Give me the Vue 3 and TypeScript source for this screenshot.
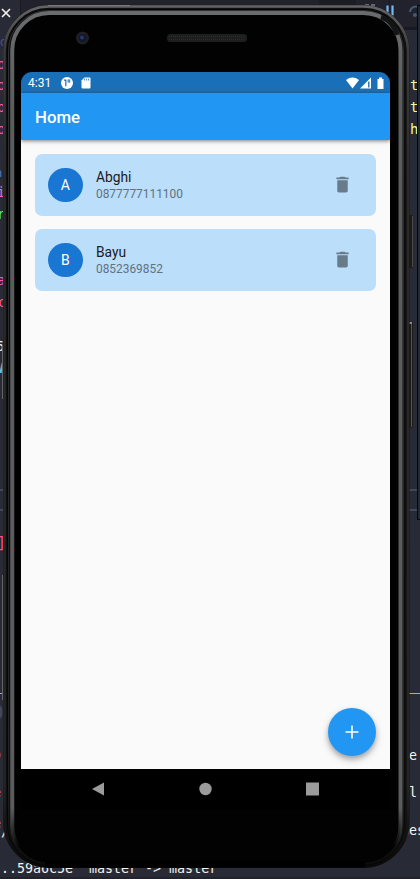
<script setup lang="ts">
interface Contact {
  name: string
  phone: string
}

interface Fragment {
  text: string
  x: number
  y: number
  color: string
  size?: number
}

const contacts: Contact[] = [
  { name: 'Abghi', phone: '0877777111100' },
  { name: 'Bayu', phone: '0852369852' },
]

// Pieces of editor and terminal text that show around the emulator window
const fragments: Fragment[] = [
  { text: 'd', x: 0, y: 46, color: '#4a5596', size: 12 },
  { text: 'p', x: -3, y: 69, color: '#ff5a9d' },
  { text: 'p', x: -3, y: 90, color: '#ff5a9d' },
  { text: 'p', x: -3, y: 112, color: '#ff5a9d' },
  { text: 'p', x: -3, y: 134, color: '#ff5a9d' },
  { text: 'n', x: -5, y: 177, color: '#4d78c8', size: 12 },
  { text: 'i', x: -3, y: 197, color: '#ff6ac1' },
  { text: 'r', x: -3, y: 219, color: '#50fa7b' },
  { text: 'a', x: -3, y: 285, color: '#ff5aa8' },
  { text: 'c', x: -2, y: 307, color: '#ff5a80' },
  { text: '6', x: -4, y: 351, color: '#f4f4ee' },
  { text: 'W', x: -5, y: 373, color: '#69d7f5' },
  { text: ']', x: -3, y: 548, color: '#ff4d8d', size: 15 },
  { text: 'o', x: -7, y: 759, color: '#ffb347' },
  { text: 'e', x: -7, y: 797, color: '#ffb347' },
  { text: 'e', x: -7, y: 828, color: '#ff9b47' },
  { text: '/', x: 1, y: 836, color: '#f0f0ec' },
  { text: 't', x: 410, y: 90, color: '#f1fa8c', size: 14 },
  { text: 't', x: 410, y: 112, color: '#f1fa8c', size: 14 },
  { text: 'h', x: 410, y: 134, color: '#f1fa8c', size: 14 },
  { text: 'e', x: 409, y: 760, color: '#f4f4ee' },
  { text: 'l', x: 409, y: 797, color: '#f4f4ee' },
  { text: 'des', x: 401, y: 835, color: '#f4f4ee' },
  { text: '..59a6c5e  master -> master', x: 1, y: 873, color: '#f4f4ee' },
]
</script>

<template>
  <div class="desktop">
    <svg class="backdrop" width="420" height="879" viewBox="0 0 420 879">
      <defs>
        <linearGradient id="rimFade" gradientUnits="userSpaceOnUse" x1="0" y1="5" x2="0" y2="868">
          <stop offset="0" stop-color="#6b6d6f" />
          <stop offset="0.12" stop-color="#5a5c5d" />
          <stop offset="0.93" stop-color="#5a5c5d" />
          <stop offset="0.975" stop-color="#5a5c5d" stop-opacity="0" />
        </linearGradient>
        <linearGradient id="edgeFade" gradientUnits="userSpaceOnUse" x1="0" y1="5" x2="0" y2="868">
          <stop offset="0" stop-color="#666666" />
          <stop offset="0.05" stop-color="#3c3c3c" />
          <stop offset="0.2" stop-color="#2c2b2a" />
          <stop offset="0.9" stop-color="#252525" />
          <stop offset="1" stop-color="#080808" />
        </linearGradient>
        <linearGradient id="lineFade" gradientUnits="userSpaceOnUse" x1="0" y1="5" x2="0" y2="868">
          <stop offset="0" stop-color="#303132" />
          <stop offset="0.9" stop-color="#222324" />
          <stop offset="1" stop-color="#060606" />
        </linearGradient>
      </defs>
      <rect width="420" height="879" fill="#282a36" />
      <rect x="20" width="400" height="28" fill="#22222c" />
      <rect x="20" width="1" height="30" fill="#191a21" />
      <rect x="319" width="37" height="28" fill="#1b1c24" />
      <rect x="389" y="0" width="1" height="5" fill="#1b1c24" />
      <rect x="390" y="27" width="27" height="3" fill="#191a21" />
      <path d="M34 9l5-3v4z" fill="#75beff" />
      <path d="M2 9l8 8M10 9l-8 8" stroke="#f0f0ea" stroke-width="1.7" />
      <path d="M365 5h3v5M371 5h3v7" stroke="#626672" stroke-width="2" fill="none" />
      <path d="M387.5 5.5v10M392.5 5.5v10" stroke="#75b9f5" stroke-width="2.2" />
      <path d="M410 12a6 6 0 0 1 10-4" stroke="#405a78" stroke-width="2" fill="none" />
      <circle cx="415" cy="15" r="2" fill="#405a78" />
      <rect y="489" width="420" height="2" fill="#44475a" />
      <rect y="509" width="420" height="2" fill="#44475a" />
      <rect y="693" width="420" height="1" fill="#bd93f9" />
      <ellipse cx="-1" cy="712" rx="3.5" ry="7" fill="#44475a" />
      <text
        v-for="(f, i) in fragments"
        :key="i"
        class="code"
        :x="f.x"
        :y="f.y"
        :fill="f.color"
        :font-size="f.size ?? 13.3"
      >{{ f.text }}</text>
      <rect x="417" y="5" width="3" height="515" fill="#060709" />
      <rect x="418" y="6" width="2" height="513" fill="#202b36" />
      <path d="M2.5 345v54M2.5 575v125" stroke="#656565" />
      <rect y="877" width="420" height="2" fill="#21222c" />

      <rect x="408" y="215" width="5" height="53" rx="1" fill="#1d1b1a" />
      <path d="M412.5 216v51" stroke="#494745" />
      <rect x="408" y="322" width="5" height="106" rx="1" fill="#1d1b1a" />
      <path d="M411.5 323v104" stroke="#555" />
      <path d="M409 323h3" stroke="#888" stroke-width="2" />

      <rect x="3" y="5" width="406.5" height="863" rx="46" fill="#101010" />
      <rect x="4.5" y="6.5" width="403.5" height="860" rx="44.5" fill="none" stroke="url(#edgeFade)" stroke-width="2.500" />
      <rect x="7.5" y="9.5" width="396.500" height="856" rx="41" fill="none" stroke="#050505" stroke-width="1" />
      <rect x="8.5" y="10.5" width="395" height="854" rx="40" fill="none" stroke="url(#lineFade)" stroke-width="1" />
      <rect x="12.25" y="13" width="388.25" height="850" rx="37" fill="#020202" stroke="url(#rimFade)" stroke-width="4" />
      <path d="M48 5.5h82" stroke="#777" />
      <path d="M10 840Q18 864 48 867H365Q397 861 402 836V868H10z" fill="none" />
      <path d="M45 864h320" stroke="#000" stroke-width="7" />
      <path d="M381 17q12 4 16 18" fill="none" stroke="#141516" stroke-width="5" />

      <circle cx="82.5" cy="38" r="6.5" fill="#202024" />
      <circle cx="82.5" cy="38" r="4" fill="#121730" />
      <circle cx="82" cy="37.5" r="2" fill="#29366b" />
      <rect x="167" y="34" width="80" height="8" rx="3.5" fill="#1d1e1e" />
      <path d="M169 36.5h76M169 39.5h76" stroke="#2b2c2c" stroke-dasharray="1 1" />
    </svg>

    <main class="screen">
      <header class="status">
        <span class="clock">4:31</span>
        <svg class="app-icon" width="12" height="12" viewBox="0 0 12 12">
          <circle cx="6" cy="6" r="6" fill="#fff" />
          <path d="M3 2.600h2.400v6.600H4.200V3.800H3zM6.600 2.600h2.600v3H6.600z" fill="#1a70b8" />
          <path d="M7.400 3.400h1v1.200h-1z" fill="#fff" />
        </svg>
        <svg class="sd-icon" width="10" height="12" viewBox="0 0 10 12">
          <path d="M3.5.5H8.500a1 1 0 0 1 1 1v9a1 1 0 0 1-1 1h-7a1 1 0 0 1-1-1v-7z" fill="#fff" />
          <path d="M3.600 1.500v2M5.600 1.500v2M7.600 1.500v2" stroke="#1a70b8" stroke-width=".8" />
        </svg>
        <svg class="system" width="38" height="12" viewBox="0 0 38 12">
          <path d="M0 3Q6.500-1.900 13 3L6.500 11.500z" fill="#fff" />
          <path d="M14 11.500L25 .5v11z" fill="#fff" />
          <path d="M22.800 4.500v6" stroke="#1a70b8" stroke-width="1.400" />
          <path d="M31.500 2H33V.5h3V2h1.500v10h-6z" fill="#fff" />
        </svg>
      </header>
      <div class="appbar"><h1>Home</h1></div>

      <section class="body">
        <article v-for="c in contacts" :key="c.name" class="card">
          <span class="avatar">{{ c.name.charAt(0) }}</span>
          <div class="info">
            <span class="name">{{ c.name }}</span>
            <span class="phone">{{ c.phone }}</span>
          </div>
          <button class="trash" aria-label="Delete">
            <svg width="21" height="21" viewBox="0 0 24 24">
              <path d="M6 19c0 1.100.9 2 2 2h8c1.100 0 2-.9 2-2V7H6v12zM19 4h-3.500l-1-1h-5l-1 1H5v2h14V4z" fill="#687b8b" />
            </svg>
          </button>
        </article>
        <button class="fab" aria-label="Add">
          <svg width="14" height="14" viewBox="0 0 14 14">
            <path d="M7 .5v13M.5 7h13" stroke="#fff" stroke-width="1.600" />
          </svg>
        </button>
      </section>

      <nav class="nav">
        <svg width="13" height="14" viewBox="0 0 13 14"><path d="M0 7L12 .5v13z" fill="#9b9b9b" /></svg>
        <svg width="13" height="14" viewBox="0 0 13 14"><circle cx="6.500" cy="7" r="6.200" fill="#9b9b9b" /></svg>
        <svg width="13" height="14" viewBox="0 0 13 14"><path d="M0 .5h13v13H0z" fill="#9b9b9b" /></svg>
      </nav>
    </main>
  </div>
</template>

<style>
body {
  margin: 0;
  background: #282a36;
}
</style>

<style scoped>
.desktop {
  position: relative;
  box-sizing: border-box;
  width: 420px;
  height: 879px;
  padding: 72px 30px 69px 21px;
  overflow: hidden;
  font-family: Roboto, sans-serif;
}
.backdrop {
  position: absolute;
  inset: 0;
  display: block;
}
.code {
  font-family: "DejaVu Sans Mono", monospace;
  white-space: pre;
}
.screen {
  position: relative;
  display: flex;
  flex-direction: column;
  width: 369px;
  height: 738px;
  overflow: hidden;
  border-radius: 11px 11px 0 0;
}
.status {
  display: flex;
  align-items: center;
  flex: none;
  box-sizing: border-box;
  height: 21px;
  padding: 0 6px 0 7px;
  background: #1a70b8;
  color: #fff;
}
.clock {
  width: 33px;
  padding-top: 1px;
  font-size: 12px;
  line-height: 20px;
}
.sd-icon {
  margin-left: 8px;
}
.system {
  margin-left: auto;
}
.appbar {
  display: flex;
  align-items: center;
  flex: none;
  height: 47px;
  padding: 1px 14px 0;
  box-sizing: border-box;
  background: #2196f3;
  box-shadow: 0 1px 4px rgba(0, 0, 0, 0.5);
  color: #fff;
  z-index: 1;
}
h1 {
  margin: 0;
  font-size: 16.8px;
  font-weight: 500;
  line-height: 20px;
}
.body {
  display: flex;
  flex: 1;
  flex-direction: column;
  gap: 13.5px;
  padding: 14px 14px 13.5px;
  background: #fafafa;
}
.card {
  display: flex;
  align-items: center;
  box-sizing: border-box;
  height: 61.5px;
  padding: 0 23.5px 0 13px;
  border-radius: 7px;
  background: #bbdefb;
}
.avatar {
  display: grid;
  place-items: center;
  width: 34.5px;
  height: 34.5px;
  border-radius: 50%;
  background: #1976d2;
  color: #fff;
  font-size: 14px;
}
.info {
  display: flex;
  flex: 1;
  flex-direction: column;
  margin-left: 13.5px;
  padding-top: 2px;
}
.name {
  color: #1a2024;
  font-size: 13.8px;
  line-height: 18px;
}
.phone {
  color: #607282;
  font-size: 11.9px;
  line-height: 17px;
}
button {
  display: grid;
  place-items: center;
  padding: 0;
  border: 0;
  background: none;
}
.fab {
  align-self: flex-end;
  width: 48px;
  height: 48px;
  margin-top: auto;
  border-radius: 50%;
  background: #2196f3;
  box-shadow: 0 3px 5px rgba(0, 0, 0, 0.24), 0 4px 9px rgba(0, 0, 0, 0.16);
}
.nav {
  display: flex;
  flex: none;
  align-items: center;
  justify-content: space-between;
  box-sizing: border-box;
  height: 41px;
  padding: 0 71px 1px;
  background: #000;
}
</style>
